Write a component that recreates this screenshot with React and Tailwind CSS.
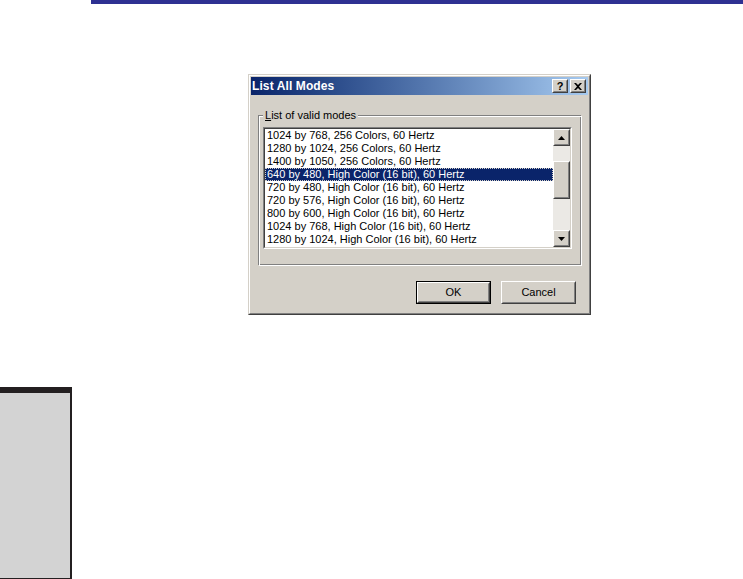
import React from "react";

const modes = [
  "1024 by 768, 256 Colors, 60 Hertz",
  "1280 by 1024, 256 Colors, 60 Hertz",
  "1400 by 1050, 256 Colors, 60 Hertz",
  "640 by 480, High Color (16 bit), 60 Hertz",
  "720 by 480, High Color (16 bit), 60 Hertz",
  "720 by 576, High Color (16 bit), 60 Hertz",
  "800 by 600, High Color (16 bit), 60 Hertz",
  "1024 by 768, High Color (16 bit), 60 Hertz",
  "1280 by 1024, High Color (16 bit), 60 Hertz",
];

function Raised({ className = "", children }) {
  return (
    <div className={"border border-t-white border-l-white border-r-[#404040] border-b-[#404040] " + className}>
      <div className="w-full h-full border border-t-[#d4d0c8] border-l-[#d4d0c8] border-r-[#808080] border-b-[#808080] bg-[#d4d0c8] flex items-center justify-center">
        {children}
      </div>
    </div>
  );
}

export default function App() {
  return (
    <div className="w-[743px] h-[579px] bg-white overflow-hidden" style={{ fontFamily: '"Liberation Sans", Arial, sans-serif' }}>
      <div className="ml-[91px] h-[4px] bg-[#2e3192]" />

      <div className="ml-[248px] mt-[70px] w-[343px] h-[241px] bg-[#d4d0c8] border border-t-[#d4d0c8] border-l-[#d4d0c8] border-r-[#404040] border-b-[#404040]">
        <div className="h-full border border-t-white border-l-white border-r-[#808080] border-b-[#808080] p-[1px] flex flex-col">
          {/* title bar */}
          <div className="h-[18px] flex items-center pl-[1px] pr-[2px] bg-gradient-to-r from-[#0a246a] to-[#a6caf0]">
            <span className="text-white font-bold text-[12px] leading-none tracking-[0.1px]">List All Modes</span>
            <div className="ml-auto flex items-center">
              <Raised className="w-[16px] h-[14px]">
                <span className="text-[11px] font-bold leading-none text-black">?</span>
              </Raised>
              <Raised className="w-[16px] h-[14px] ml-[2px]">
                <svg width="8" height="7" viewBox="0 0 8 7">
                  <path d="M0 0h2l2 2 2-2h2L5 3.5 8 7H6L4 5 2 7H0l3-3.5z" fill="black" />
                </svg>
              </Raised>
            </div>
          </div>

          {/* body */}
          <div className="flex-1 flex flex-col px-[7px] pt-[20px]">
            <div className="relative border border-[#808080] h-[150px]">
              <div className="absolute pointer-events-none border border-white" style={{ inset: "0 -2px -2px 0" }} />
              <span className="absolute -top-[8px] left-[4px] bg-[#d4d0c8] px-[2px] text-[11px] leading-[14px] text-black">
                <span className="underline">L</span>ist of valid modes
              </span>
              <div className="absolute left-[4px] top-[11px] w-[309px] h-[122px] border border-t-[#808080] border-l-[#808080] border-r-white border-b-white">
                <div className="w-full h-full border border-t-[#404040] border-l-[#404040] border-r-[#d4d0c8] border-b-[#d4d0c8] bg-white flex">
                  <div className="flex-1 flex flex-col pt-[0px]">
                    {modes.map((m, i) => (
                      <div
                        key={i}
                        className={
                          "h-[13px] text-[11px] leading-[13px] pl-[2px] whitespace-nowrap " +
                          (i === 3 ? "bg-[#0a246a] text-white outline outline-1 outline-dotted outline-[#d4d0c8] -outline-offset-1" : "text-black")
                        }
                      >
                        {m}
                      </div>
                    ))}
                  </div>
                  <div className="w-[17px] flex flex-col bg-[#ebe9e5]">
                    <Raised className="w-[17px] h-[17px]">
                      <svg width="7" height="4" viewBox="0 0 7 4"><path d="M3.5 0L7 4H0z" fill="black" /></svg>
                    </Raised>
                    <div className="h-[15px]" />
                    <Raised className="w-[17px] h-[38px]" />
                    <div className="flex-1" />
                    <Raised className="w-[17px] h-[17px]">
                      <svg width="7" height="4" viewBox="0 0 7 4"><path d="M0 0h7L3.5 4z" fill="black" /></svg>
                    </Raised>
                  </div>
                </div>
              </div>
            </div>

            <div className="flex justify-end gap-[10px] mt-[16px] pr-[5px]">
              <div className="w-[75px] h-[23px] border border-black">
                <Raised className="w-full h-full">
                  <span className="text-[11px] text-black">OK</span>
                </Raised>
              </div>
              <Raised className="w-[75px] h-[23px]">
                <span className="text-[11px] text-black">Cancel</span>
              </Raised>
            </div>
          </div>
        </div>
      </div>

      <div className="mt-[72px] w-[72px] h-[192px] bg-[#d3d3d3] border-t-[6px] border-t-[#231f20] border-r-2 border-r-[#231f20] border-b border-b-[#231f20]" />
    </div>
  );
}
